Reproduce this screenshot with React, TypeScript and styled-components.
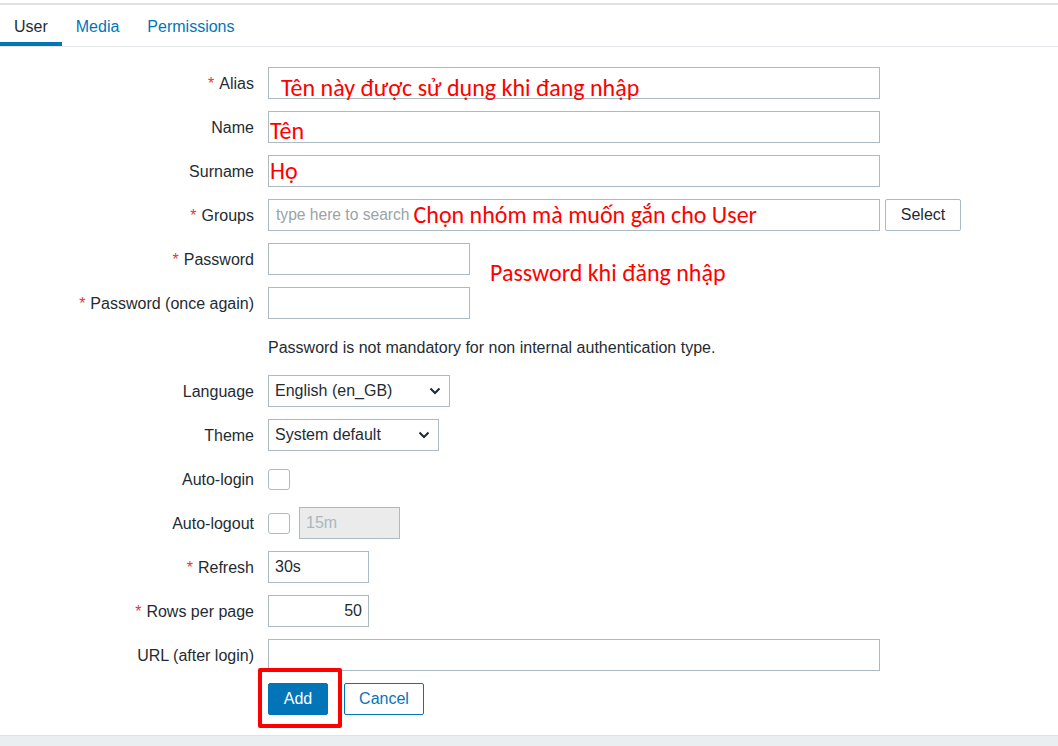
import React from "react";
import styled, { createGlobalStyle, css } from "styled-components";

const Global = createGlobalStyle`
  html, body { margin: 0; padding: 0; background: #ffffff; }
  body { font-family: "Liberation Sans", Arial, sans-serif; font-size: 16px; color: #1f2c33; }
  * { box-sizing: border-box; }
`;

const Page = styled.div`
  width: 1058px;
  height: 746px;
  display: flex;
  flex-direction: column;
  padding-top: 3px;
  overflow: hidden;
`;

const TabBar = styled.nav`
  display: flex;
  border-top: 2px solid #dde1e4;
  border-bottom: 1px solid #e6e9eb;
  height: 44px;
`;

const Tab = styled.div<{ $active?: boolean }>`
  padding: 0 14px;
  display: flex;
  align-items: center;
  height: 41px;
  font-size: 16px;
  color: ${(p) => (p.$active ? "#1f2c33" : "#0275b8")};
  border-bottom: 4px solid ${(p) => (p.$active ? "#0275b8" : "transparent")};
  padding-top: 6px;
`;

const Form = styled.div`
  flex: 1;
  display: grid;
  grid-template-columns: 254px 1fr;
  column-gap: 14px;
  row-gap: 12px;
  align-content: start;
  padding-top: 20px;
`;

const Label = styled.div`
  height: 32px;
  display: flex;
  align-items: center;
  justify-content: flex-end;
  white-space: nowrap;
  font-size: 16px;
  color: #1f2c33;
  padding-top: 1px;
`;

const Star = styled.span`
  color: #e33734;
  margin-right: 5px;
`;

const Field = styled.div`
  height: 32px;
  display: flex;
  align-items: center;
`;

const Box = styled.div<{ $w: number; $disabled?: boolean; $right?: boolean; $pl?: number }>`
  width: ${(p) => p.$w}px;
  height: 32px;
  border: 1px solid #acbbc2;
  background: ${(p) => (p.$disabled ? "#ebebeb" : "#ffffff")};
  color: ${(p) => (p.$disabled ? "#a8b8c0" : "#1f2c33")};
  display: flex;
  align-items: center;
  padding: 0 6px;
  ${(p) => p.$pl !== undefined && css`padding-left: ${p.$pl}px;`}
  font-size: 16px;
  white-space: nowrap;
  overflow: visible;
  ${(p) => p.$right && css`justify-content: flex-end;`}
`;

const Placeholder = styled.span`
  color: #9aa3a8;
  font-size: 15.6px;
`;

const Note = styled.span<{ $x?: number; $y?: number }>`
  color: #ff0000;
  font-family: Carlito, "Open Sans", "Noto Sans", sans-serif;
  font-size: 24px;
  line-height: 1;
  margin-left: ${(p) => p.$x ?? 0}px;
  position: relative;
  top: ${(p) => p.$y ?? 0}px;
  white-space: nowrap;
`;

const SelectBox = styled(Box)`
  justify-content: space-between;
  padding-right: 8px;
`;

const Chevron = () => (
  <svg width="12" height="8" viewBox="0 0 12 8">
    <path d="M1.5 1.5 L6 6 L10.5 1.5" fill="none" stroke="#1f2c33" strokeWidth="2" />
  </svg>
);

const GreyButton = styled.button`
  height: 32px;
  width: 76px;
  margin-left: 5px;
  border: 1px solid #acbbc2;
  border-radius: 2px;
  background: #ffffff;
  color: #1f2c33;
  font-family: "Liberation Sans", Arial, sans-serif;
  font-size: 16px;
`;

const Check = styled.div`
  width: 22px;
  height: 21px;
  border: 1px solid #acbbc2;
  border-radius: 3px;
  background: #ffffff;
  margin-right: 9px;
`;

const Text = styled.span`
  font-size: 16px;
  color: #1f2c33;
  padding-top: 2px;
`;

const Buttons = styled.div`
  grid-column: 2;
  display: flex;
  gap: 16px;
  height: 32px;
`;

const Highlight = styled.span`
  position: relative;
  display: flex;
  &::after {
    content: "";
    position: absolute;
    left: -10px;
    right: -14px;
    top: -15px;
    bottom: -13px;
    border: 4px solid #ff0000;
    border-radius: 2px;
  }
`;

const MainButton = styled.button<{ $primary?: boolean }>`
  height: 32px;
  width: ${(p) => (p.$primary ? 60 : 80)}px;
  border-radius: 2px;
  font-family: "Liberation Sans", Arial, sans-serif;
  font-size: 16px;
  border: 1px solid #0275b8;
  background: ${(p) => (p.$primary ? "#0275b8" : "#ffffff")};
  color: ${(p) => (p.$primary ? "#ffffff" : "#0275b8")};
`;

const Footer = styled.div`
  height: 11px;
  background: #ebeef0;
  border-top: 1px solid #dde2e5;
`;

const Row: React.FC<{ label: string; req?: boolean; children?: React.ReactNode }> = ({ label, req, children }) => (
  <>
    <Label>
      {req && <Star>*</Star>}
      {label}
    </Label>
    <Field>{children}</Field>
  </>
);

export default function App() {
  return (
    <Page>
      <Global />
      <TabBar>
        <Tab $active>User</Tab>
        <Tab>Media</Tab>
        <Tab>Permissions</Tab>
      </TabBar>
      <Form>
        <Row label="Alias" req>
          <Box $w={612}>
            <Note $x={6} $y={5}>Tên này được sử dụng khi đang nhập</Note>
          </Box>
        </Row>
        <Row label="Name">
          <Box $w={612} $pl={1}>
            <Note $y={4}>Tên</Note>
          </Box>
        </Row>
        <Row label="Surname">
          <Box $w={612} $pl={1}>
            <Note $y={0}>Họ</Note>
          </Box>
        </Row>
        <Row label="Groups" req>
          <Box $w={612} $pl={7}>
            <Placeholder>type here to search</Placeholder>
            <Note $x={4}>Chọn nhóm mà muốn gắn cho User</Note>
          </Box>
          <GreyButton>Select</GreyButton>
        </Row>
        <Row label="Password" req>
          <Box $w={202} />
          <Note $x={20} $y={14}>Password khi đăng nhập</Note>
        </Row>
        <Row label="Password (once again)" req>
          <Box $w={202} />
        </Row>
        <Row label="">
          <Text>Password is not mandatory for non internal authentication type.</Text>
        </Row>
        <Row label="Language">
          <SelectBox $w={182}>
            <span>English (en_GB)</span>
            <Chevron />
          </SelectBox>
        </Row>
        <Row label="Theme">
          <SelectBox $w={171}>
            <span>System default</span>
            <Chevron />
          </SelectBox>
        </Row>
        <Row label="Auto-login">
          <Check />
        </Row>
        <Row label="Auto-logout">
          <Check />
          <Box $w={101} $disabled>15m</Box>
        </Row>
        <Row label="Refresh" req>
          <Box $w={101}>30s</Box>
        </Row>
        <Row label="Rows per page" req>
          <Box $w={101} $right>50</Box>
        </Row>
        <Row label="URL (after login)">
          <Box $w={612} />
        </Row>
        <Buttons>
          <Highlight>
            <MainButton $primary>Add</MainButton>
          </Highlight>
          <MainButton>Cancel</MainButton>
        </Buttons>
      </Form>
      <Footer />
    </Page>
  );
}
